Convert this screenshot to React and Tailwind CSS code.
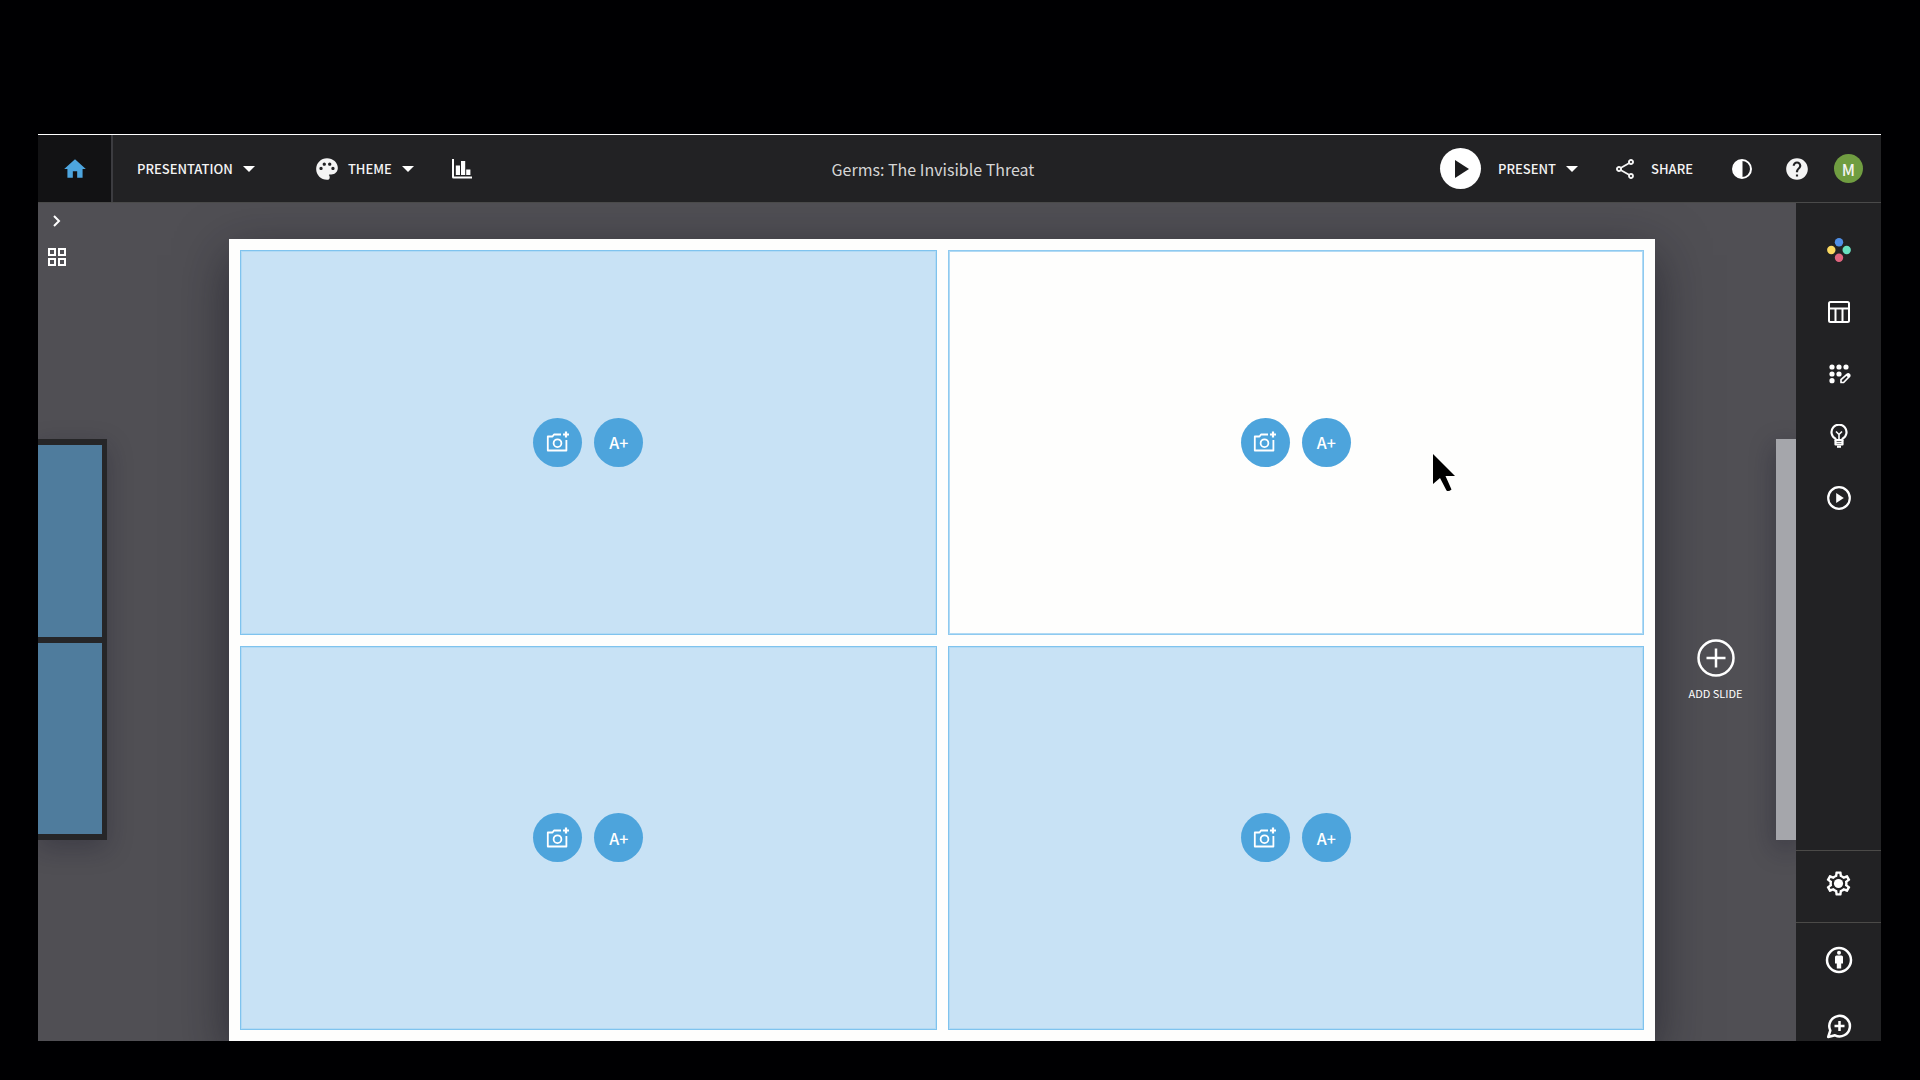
import React from 'react';
import { MdHome, MdPalette, MdHelp, MdOutlineShare } from 'react-icons/md';

const Caret = () => (
  <svg viewBox="0 0 12 6" className="w-3 h-[6px] fill-white">
    <path d="M0 0h12L6 6z" />
  </svg>
);

const ChartIcon = () => (
  <svg viewBox="0 0 20 20" className="w-5 h-5 fill-white">
    <path d="M0 0h2v17.500h18v2H1.500Q0 19.500 0 18z" />
    <path d="M3.800 6.500h4.200V16H3.800zM9 2h4.200v14H9zM14.200 10.500h4.200V16h-4.200z" />
  </svg>
);

const ContrastIcon = () => (
  <svg viewBox="0 0 20 20" className="w-5 h-5">
    <circle cx="10" cy="10" r="9" fill="none" stroke="white" strokeWidth="2" />
    <path d="M10.500 1a9 9 0 0 0 0 18z" fill="white" />
  </svg>
);

const DotsIcon = () => (
  <svg viewBox="0 0 24 24" className="w-6 h-6">
    <circle cx="12" cy="4.300" r="4.200" fill="#4f8fe6" />
    <circle cx="4.300" cy="12" r="4.200" fill="#fbd961" />
    <circle cx="19.700" cy="12" r="4.200" fill="#68e0c0" />
    <circle cx="12" cy="19.700" r="4.200" fill="#e0657f" />
  </svg>
);

const LayoutIcon = () => (
  <svg viewBox="0 0 24 24" className="w-6 h-6 fill-none stroke-white stroke-2">
    <rect x="2" y="2" width="20" height="20" rx="1.500" />
    <path d="M2 8.500h20M8.500 8.500V22M15.500 8.500V22" />
  </svg>
);

const DesignIcon = () => (
  <svg viewBox="0 0 24 24" className="w-6 h-6">
    <g fill="white">
      <circle cx="5" cy="5" r="2.600" />
      <circle cx="12" cy="5" r="2.600" />
      <circle cx="19" cy="5" r="2.600" />
      <circle cx="5" cy="12" r="2.600" />
      <circle cx="12" cy="12" r="2.600" />
      <circle cx="5" cy="18.700" r="2.600" />
    </g>
    <path d="M14 20.500v-2.800l6-5.400q1.200-1 2.200 0t.2 2.200l-5.800 6z" fill="none" stroke="white" strokeWidth="1.700" strokeLinejoin="round" />
    <path d="M18.500 13l3.200 3 1.500-1.800-2-2.400z" fill="white" />
  </svg>
);

const BulbIcon = () => (
  <svg viewBox="0 0 24 24" className="w-6 h-6 fill-none stroke-white" strokeWidth="2.200" strokeLinejoin="round">
    <path d="M8.500 16.200v-1.400a7.500 7.500 0 1 1 7 0v1.400z" />
    <path d="M8.500 16.200v4.300h7v-4.300" />
    <path d="M12 16v-5M9 7.500l3 3 3-3" strokeWidth="1.600" />
    <path d="M9 18.500h6" strokeWidth="1.200" />
    <path d="M10 22.700h4" />
  </svg>
);

const PlayIcon = () => (
  <svg viewBox="0 0 24 24" className="w-6 h-6">
    <circle cx="12" cy="12" r="10.800" fill="none" stroke="white" strokeWidth="2.200" />
    <path d="M9.200 7v10l7.600-5z" fill="white" />
  </svg>
);

const GearIcon = () => (
  <svg viewBox="0 0 24 24" className="w-[29px] h-[29px] fill-white">
    <path d="M19.430 12.980c.04-.32.07-.64.07-.98 0-.34-.03-.66-.07-.98l2.110-1.650c.19-.15.24-.42.12-.64l-2-3.460a.5.5 0 0 0-.61-.22l-2.490 1c-.52-.4-1.080-.73-1.690-.98l-.38-2.650A.488.488 0 0 0 14 2h-4c-.25 0-.46.18-.49.42l-.38 2.650c-.61.25-1.170.59-1.690.98l-2.490-1a.5.5 0 0 0-.61.22l-2 3.460c-.13.22-.07.49.12.64l2.110 1.650c-.04.32-.07.65-.07.98s.03.66.07.98l-2.110 1.650c-.19.15-.24.42-.12.64l2 3.460c.12.22.38.3.61.22l2.490-1c.52.4 1.080.73 1.690.98l.38 2.650c.03.24.24.42.49.42h4c.25 0 .46-.18.49-.42l.38-2.650c.61-.25 1.170-.59 1.690-.98l2.490 1c.23.09.49 0 .61-.22l2-3.460c.12-.22.07-.49-.12-.64l-2.110-1.650zm-1.980-1.710c.04.31.05.52.05.73s-.02.43-.05.73l-.14 1.130.89.7 1.080.84-.7 1.210-1.270-.51-1.040-.42-.9.68c-.43.32-.84.56-1.250.73l-1.060.43-.16 1.130-.2 1.350h-1.400l-.19-1.350-.16-1.130-1.060-.43c-.43-.18-.83-.41-1.230-.71l-.91-.7-1.060.43-1.270.51-.7-1.210 1.080-.84.89-.7-.14-1.130A7.500 7.500 0 0 1 6.500 12c0-.2.020-.43.05-.73l.14-1.130-.89-.7-1.080-.84.7-1.210 1.270.51 1.040.42.9-.68c.43-.32.84-.56 1.250-.73l1.060-.43.160-1.130.2-1.350h1.390l.19 1.350.16 1.130 1.060.43c.43.18.83.41 1.230.71l.91.7 1.060-.43 1.270-.51.7 1.210-1.070.85-.89.7.14 1.130z" />
    <circle cx="12" cy="12" r="3.800" />
  </svg>
);

const AccessibilityIcon = () => (
  <svg viewBox="0 0 28 28" className="w-7 h-7">
    <circle cx="14" cy="14" r="12" fill="none" stroke="white" strokeWidth="2.500" />
    <g fill="white">
      <circle cx="14" cy="6.800" r="2" />
      <path d="M11.500 9.500h5q1.500 0 1.500 1.500v6.500h-1.800V22.500h-4.400V17.500H10V11q0-1.500 1.500-1.500z" />
    </g>
  </svg>
);

const FeedbackIcon = () => (
  <svg viewBox="0 0 26 26" className="w-[26px] h-[26px] fill-none stroke-white" strokeWidth="2.500">
    <path d="M4.300 17.500A10.300 10.300 0 1 1 9 22.300L2.200 24z" strokeLinejoin="round" />
    <path d="M13.500 8v10M8.500 13h10" />
  </svg>
);

const CameraIcon = () => (
  <svg viewBox="0 0 24 24" className="w-6 h-6 fill-none stroke-white" strokeWidth="1.800" strokeLinejoin="round">
    <path d="M15 4.500H8L6.500 6.500H1.800v14h18.600V10" />
    <circle cx="11.500" cy="13.200" r="3.900" />
    <path d="M20 1.500v6M17 4.500h6" strokeWidth="2.200" />
  </svg>
);

const cells = [
  { id: 1, className: 'bg-[#c8e2f5] border-[#7fc3ee]' },
  { id: 2, className: 'bg-[#fefefd] border-[#8ecaf0]' },
  { id: 3, className: 'bg-[#c8e2f5] border-[#7fc3ee]' },
  { id: 4, className: 'bg-[#c8e2f5] border-[#7fc3ee]' },
];

const tools = [
  { label: 'Assets', icon: <DotsIcon /> },
  { label: 'Layouts', icon: <LayoutIcon /> },
  { label: 'Design', icon: <DesignIcon /> },
  { label: 'Ideas', icon: <BulbIcon /> },
  { label: 'Animate', icon: <PlayIcon /> },
];

const Header = () => (
  <header className="flex h-[69px] shrink-0 items-center border-t border-b border-t-white border-b-[#4a4a4a] bg-[#222224] text-[13px] font-medium leading-5 text-[#f4f4f4]">
    <button aria-label="Home" className="flex h-full w-[75px] shrink-0 items-center justify-center border-r-2 border-[#3c3c40] bg-[#121214]">
      <MdHome className="h-[26px] w-[26px] text-[#4da5df]" />
    </button>
    <button className="ml-6 flex items-center gap-[10px]">
      PRESENTATION <Caret />
    </button>
    <button className="ml-[59px] flex items-center gap-[10px]">
      <MdPalette className="h-[26px] w-[26px] -mr-[2px]" />
      THEME <Caret />
    </button>
    <button aria-label="Charts" className="ml-[38px]">
      <ChartIcon />
    </button>
    <h1 className="flex-1 pr-[46px] text-center text-base font-normal text-[#d6d6d6]">
      Germs: The Invisible Threat
    </h1>
    <button className="flex items-center">
      <span className="mr-[17px] flex h-[41px] w-[41px] items-center justify-center rounded-full bg-white">
        <svg viewBox="0 0 14 18" className="ml-[3px] h-[18px] w-[14px] fill-[#1c1c1e]">
          <path d="M0 0v18l14-9z" />
        </svg>
      </span>
      <span className="mr-[10px]">PRESENT</span>
      <Caret />
    </button>
    <button className="ml-[35px] flex items-center gap-[14px]">
      <MdOutlineShare className="h-6 w-6" />
      SHARE
    </button>
    <button aria-label="Contrast" className="ml-[39px]">
      <ContrastIcon />
    </button>
    <button aria-label="Help" className="ml-8">
      <MdHelp className="h-[26px] w-[26px]" />
    </button>
    <button className="ml-6 mr-[18px] flex h-[29px] w-[29px] items-center justify-center rounded-full bg-[#709d41] text-base">
      M
    </button>
  </header>
);

const Cell = ({ className }) => (
  <div className={`flex items-center justify-center gap-3 border shadow-[inset_0_0_0_1px_#b2daf4] ${className}`}>
    <button aria-label="Add image" className="flex h-[49px] w-[49px] items-center justify-center rounded-full bg-[#4da4dc]">
      <CameraIcon />
    </button>
    <button className="flex h-[49px] w-[49px] items-center justify-center rounded-full bg-[#4da4dc] text-base font-medium text-white">
      A+
    </button>
  </div>
);

const Sidebar = () => (
  <aside className="flex w-[85px] shrink-0 flex-col items-center bg-[#222224]">
    <nav className="flex flex-1 flex-col items-center gap-[38px] pt-[35px]">
      {tools.map((tool) => (
        <button key={tool.label} aria-label={tool.label}>
          {tool.icon}
        </button>
      ))}
    </nav>
    <button aria-label="Settings" className="flex h-[73px] w-full items-center justify-center border-t border-b border-[#4b4a48] pb-[6px]">
      <GearIcon />
    </button>
    <button aria-label="Accessibility" className="mt-[23px]">
      <AccessibilityIcon />
    </button>
    <button aria-label="Feedback" className="mt-[39px] mb-[2px]">
      <FeedbackIcon />
    </button>
  </aside>
);

const App = () => {
  return (
    <div className="flex h-screen flex-col bg-[#000002] pl-[38px] pr-[39px] pt-[134px] pb-[39px] font-['Noto_Sans_CJK_SC',sans-serif]">
      <Header />

      <div className="flex min-h-0 flex-1 overflow-hidden bg-[#504f54]">
        <div className="flex w-[191px] shrink-0 flex-col items-start">
          <button aria-label="Next" className="ml-[15px] mt-3">
            <svg viewBox="0 0 8 12" className="h-3 w-2 fill-none stroke-white stroke-2">
              <path d="M1 1l5 5-5 5" />
            </svg>
          </button>
          <button aria-label="Slide grid" className="ml-[10px] mt-[21px]">
            <svg viewBox="0 0 18 18" className="h-[18px] w-[18px] fill-none stroke-white stroke-2">
              <path d="M1 1h6v6H1zM11 1h6v6h-6zM1 11h6v6H1zM11 11h6v6h-6z" />
            </svg>
          </button>
          {/* previous slide */}
          <div className="mt-[173px] flex h-[401px] w-[69px] flex-col gap-[6px] bg-[#262628] py-[6px] pr-[5px] shadow-[0_8px_26px_rgba(20,20,40,0.3)]">
            <div className="flex-1 bg-[#4f7c9d]" />
            <div className="flex-1 bg-[#4f7c9d]" />
          </div>
        </div>

        <main className="mt-9 grid flex-1 grid-cols-2 grid-rows-2 gap-[11px] bg-[#fefefd] p-[11px] shadow-[0_16px_48px_rgba(20,20,32,0.6)]">
          {cells.map((cell) => (
            <Cell key={cell.id} className={cell.className} />
          ))}
        </main>

        <div className="flex w-[141px] shrink-0 items-start">
          <button className="mt-[436px] flex flex-1 flex-col items-center gap-[6px] text-[11px] text-white">
            <svg viewBox="0 0 38 38" className="h-[38px] w-[38px] fill-none stroke-white" strokeWidth="2.500">
              <circle cx="19" cy="19" r="17.500" />
              <path d="M19 9.500v19M9.500 19h19" />
            </svg>
            <span className="leading-5">ADD SLIDE</span>
          </button>
          {/* next slide */}
          <div className="mt-[236px] h-[401px] w-5 bg-[#a5a6ab] shadow-[0_8px_26px_rgba(20,20,40,0.4)]" />
        </div>

        <Sidebar />
      </div>

      <svg viewBox="0 0 24 40" className="pointer-events-none absolute left-[1432px] top-[453px] h-10 w-6">
        <path d="M1 1v30l7-6 6.500 12.500q2 1.500 5-1L13.500 23H23z" fill="black" />
      </svg>
    </div>
  );
};

export default App;
